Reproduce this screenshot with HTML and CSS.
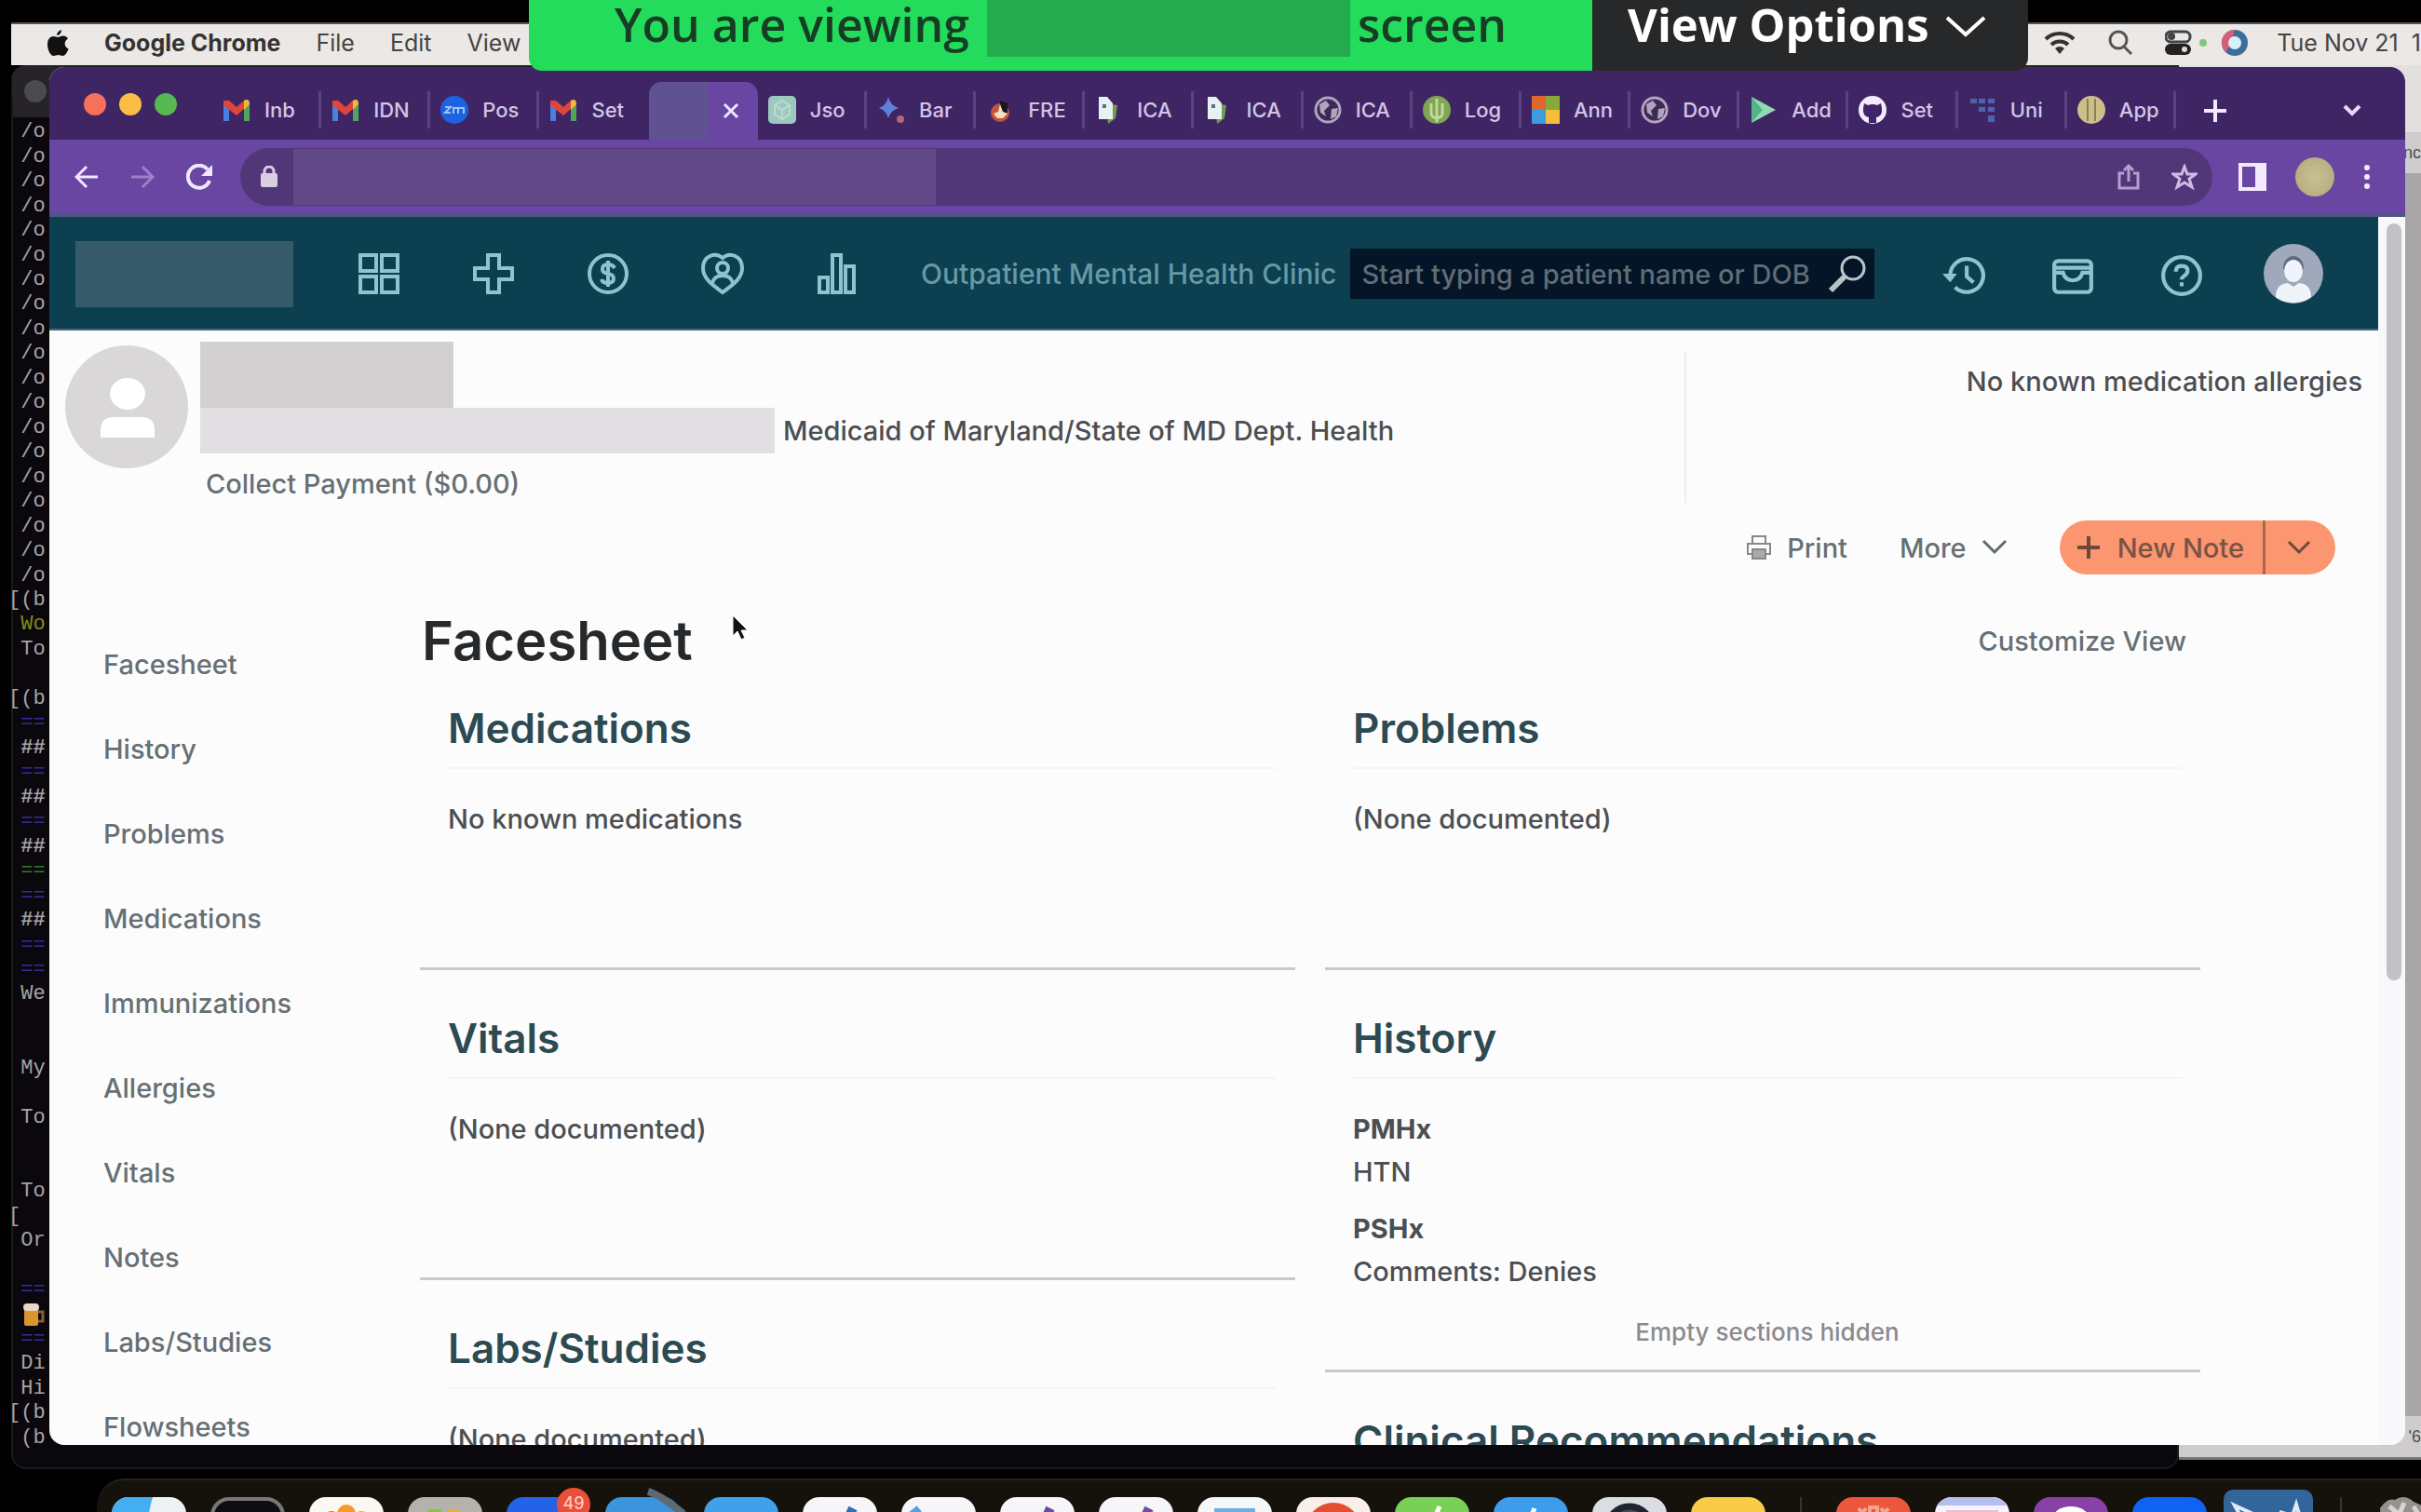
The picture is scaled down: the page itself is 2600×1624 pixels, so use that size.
FILE: index.html
```html
<!DOCTYPE html>
<html lang="en">
<head>
    <meta charset="UTF-8">
    <meta name="viewport" content="width=device-width, initial-scale=1.0">
    <title>Facesheet</title>
    <link rel="stylesheet" href="styles.css">
</head>
<body>
    <div class="desktop">
        <div class="menubar">
            <svg class="apple" viewBox="0 0 24 30"><path d="M16 1c0 3-2 6-5 6 0-3 2-5 5-6zM12 9c2 0 3-1.500 6-1.500 2 0 4 1 5 3-5 3-4 9 .5 11-1 3-3.500 7.500-6 7.500-2 0-3-1-5-1s-3 1-5 1C4 29 1 22 1 17c0-6 3-9 6.500-9C9.500 8 11 9 12 9z" fill="#111"/></svg>
            <strong>Google Chrome</strong>
            <span>File</span>
            <span>Edit</span>
            <span>View</span>
            <div class="status">
                <svg width="34" height="28" viewBox="0 0 34 28" fill="none" stroke="#333" stroke-width="4"><path d="M2 10a22 22 0 0 1 30 0M8 16a13 13 0 0 1 18 0"/><path d="M12 20l5 6 5-6a7 7 0 0 0-10 0z" fill="#333" stroke="none"/></svg>
                <svg width="28" height="28" viewBox="0 0 28 28" fill="none" stroke="#555" stroke-width="3"><circle cx="12" cy="11" r="9"/><path d="M18 18l8 8"/></svg>
                <svg class="control" width="46" height="28" viewBox="0 0 46 28"><rect x="1" y="2" width="26" height="11" rx="5" fill="none" stroke="#444" stroke-width="3"/><circle cx="7" cy="7" r="4" fill="#444"/><rect y="15" width="28" height="12" rx="6" fill="#222"/><circle cx="21" cy="21" r="3" fill="#ddd"/><circle cx="41" cy="14" r="4" fill="#7fc77c"/></svg>
                <svg width="30" height="30" viewBox="0 0 30 30"><circle cx="15" cy="15" r="14" fill="#3b6f9c"/><path d="M15 1A14 14 0 0 0 5 25l6-8z" fill="#d65c7c"/><circle cx="15" cy="15" r="7" fill="#d8f1f6"/></svg>
                <span class="date">Tue Nov 21&nbsp; 1</span>
            </div>
        </div>

        <div class="terminal">
            <div class="terminal-dot"></div>
            <div class="lines">
                <span> /o</span><span> /o</span><span> /o</span><span> /o</span><span> /o</span><span> /o</span>
                <span> /o</span><span> /o</span><span> /o</span><span> /o</span><span> /o</span><span> /o</span>
                <span> /o</span><span> /o</span><span> /o</span><span> /o</span><span> /o</span><span> /o</span>
                <span> /o</span>
                <span>[(b</span>
                <span class="yellow"> Wo</span>
                <span> To</span>
                <span></span>
                <span>[(b</span>
                <span class="blue"> ==</span>
                <span class="bold"> ##</span>
                <span class="blue"> ==</span>
                <span class="bold"> ##</span>
                <span class="blue"> ==</span>
                <span class="bold"> ##</span>
                <span class="green"> ==</span>
                <span class="blue"> ==</span>
                <span class="bold"> ##</span>
                <span class="blue"> ==</span>
                <span class="blue"> ==</span>
                <span> We</span>
                <span></span>
                <span></span>
                <span> My</span>
                <span></span>
                <span> To</span>
                <span></span>
                <span></span>
                <span> To</span>
                <span>[</span>
                <span> Or</span>
                <span></span>
                <span class="blue"> ==</span>
                <span><svg class="beer" viewBox="0 0 26 26"><rect x="3" y="6" width="15" height="19" rx="2" fill="#d9952e"/><path d="M18 10h5v10h-5" fill="none" stroke="#8a5a34" stroke-width="3"/><rect x="2" y="1" width="17" height="8" rx="4" fill="#e8d8c8"/></svg></span>
                <span class="blue"> ==</span>
                <span> Di</span>
                <span> Hi</span>
                <span>[(b</span>
                <span> (b</span>
            </div>
        </div>

        <div class="side-window">
            <div class="side-top"></div>
            <div class="side-label">nc</div>
            <div class="side-body"></div>
            <div class="side-label">'6</div>
        </div>

        <div class="browser">
            <div class="tabstrip">
                <div class="lights"><i class="red"></i><i class="amber"></i><i class="lime"></i></div>
                <div class="tabs">
                    <div class="tab"><svg viewBox="0 0 30 30"><use href="#gmail"/></svg><span>Inb</span></div>
                    <div class="tab"><svg viewBox="0 0 30 30"><use href="#gmail"/></svg><span>IDN</span></div>
                    <div class="tab"><svg viewBox="0 0 30 30"><circle cx="15" cy="15" r="15" fill="#1d62e0"/><path d="M5 12h6l-6 6h6M14 19v-6h5v6M19 13h6v6" fill="none" stroke="#9cc3f5" stroke-width="2"/></svg><span>Pos</span></div>
                    <div class="tab no-line"><svg viewBox="0 0 30 30"><use href="#gmail"/></svg><span>Set</span></div>
                    <div class="tab active"><div class="tab-mask"></div><button class="icon-btn" aria-label="Close tab"><svg width="18" height="18" viewBox="0 0 18 18" fill="none" stroke="#efe6ff" stroke-width="3"><path d="M2 2l14 14M16 2L2 16"/></svg></button></div>
                    <div class="tab"><svg viewBox="0 0 30 30"><rect width="30" height="30" rx="5" fill="#9cc8bd"/><path d="M15 5l8 5v10l-8 5-8-5V10zM7 10l8 5 8-5M15 15v10" fill="none" stroke="#b9dcd4" stroke-width="2"/></svg><span>Jso</span></div>
                    <div class="tab"><svg viewBox="0 0 30 30"><path d="M12 1q2 9 11 12-9 3-11 11Q10 16 2 13q8-3 10-12z" fill="#5b82d8"/><circle cx="25" cy="25" r="4" fill="#b0667c"/></svg><span>Bar</span></div>
                    <div class="tab"><svg viewBox="0 0 30 30"><circle cx="15" cy="18" r="10" fill="#c0563a"/><path d="M15 5l8 3v10h-8z" fill="#1c1620"/><path d="M15 9l3 8 5 2-5 5h-6l-4-5 5-2z" fill="#f4dfc4"/></svg><span>FRE</span></div>
                    <div class="tab"><svg viewBox="0 0 30 30"><use href="#bfile"/></svg><span>ICA</span></div>
                    <div class="tab"><svg viewBox="0 0 30 30"><use href="#bfile"/></svg><span>ICA</span></div>
                    <div class="tab"><svg viewBox="0 0 30 30"><use href="#globe"/></svg><span>ICA</span></div>
                    <div class="tab"><svg viewBox="0 0 30 30"><circle cx="15" cy="15" r="15" fill="#7fa653"/><path d="M15 3v25M9 8v11q0 4 6 5 6-1 6-5V8" fill="none" stroke="#c3d79b" stroke-width="3"/></svg><span>Log</span></div>
                    <div class="tab"><svg viewBox="0 0 30 30"><path d="M0 0h15v15H0z" fill="#e0662f"/><path d="M15 0h15v15H15z" fill="#86a93a"/><path d="M0 15h15v15H0z" fill="#3d9be0"/><path d="M15 15h15v15H15z" fill="#f4bd3a"/></svg><span>Ann</span></div>
                    <div class="tab"><svg viewBox="0 0 30 30"><use href="#globe"/></svg><span>Dov</span></div>
                    <div class="tab"><svg viewBox="0 0 30 30"><path d="M2 1l26 14L2 29z" fill="#8fdcb4"/><path d="M2 1l12 14L2 29z" fill="#54b487"/></svg><span>Add</span></div>
                    <div class="tab"><svg viewBox="0 0 30 30"><circle cx="15" cy="15" r="15" fill="#f3ecff"/><path d="M6 8l4 2q5-2 10 0l4-2 1 5q1 9-6 10v6h-8v-6Q4 22 5 13z" fill="#40246a"/></svg><span>Set</span></div>
                    <div class="tab"><svg viewBox="0 0 30 30" fill="#4c64ae"><path d="M2 3h7v5H2zM11 3h7v5h-7zM21 3h7v5h-7zM11 12h7v5h-7zM21 12h7v5h-7zM21 21h7v7h-7z"/></svg><span>Uni</span></div>
                    <div class="tab"><svg viewBox="0 0 30 30"><circle cx="15" cy="15" r="15" fill="#cdbf88"/><path d="M11 3v24M19 3v24" stroke="#8d7f5c" stroke-width="2"/></svg><span>App</span></div>
                </div>
                <div class="tab-tools">
                    <button class="icon-btn" aria-label="New tab"><svg width="24" height="24" viewBox="0 0 24 24" stroke="#f3eaff" stroke-width="4"><path d="M12 0v24M0 12h24"/></svg></button>
                    <button class="icon-btn" aria-label="Search tabs"><svg width="20" height="14" viewBox="0 0 20 14" fill="none" stroke="#e6d9f7" stroke-width="4"><path d="M2 2l8 8 8-8"/></svg></button>
                </div>
            </div>

            <div class="toolbar">
                <button class="icon-btn" aria-label="Back"><svg width="26" height="26" viewBox="0 0 26 26" fill="none" stroke="#efe6ff" stroke-width="3"><path d="M25 13H3M13 2L2 13l11 11"/></svg></button>
                <button class="icon-btn" aria-label="Forward"><svg width="26" height="26" viewBox="0 0 26 26" fill="none" stroke="#9c80c9" stroke-width="3"><path d="M1 13h22M13 2l11 11-11 11"/></svg></button>
                <button class="icon-btn" aria-label="Reload"><svg width="28" height="28" viewBox="0 0 28 28" fill="none" stroke="#efe6ff" stroke-width="4"><path d="M23 6a12 12 0 1 0 2 12"/><path d="M28 1v12H16z" fill="#efe6ff" stroke="none"/></svg></button>
                <div class="omnibox">
                    <svg width="18" height="24" viewBox="0 0 18 24"><rect y="8" width="18" height="15" rx="2" fill="#d9cfe4"/><path d="M4 9V6a5 5 0 0 1 10 0v3" fill="none" stroke="#d9cfe4" stroke-width="3"/></svg>
                    <div class="url-mask"></div>
                    <button class="icon-btn" aria-label="Share"><svg width="26" height="30" viewBox="0 0 26 30" fill="none" stroke="#b49fd0" stroke-width="3"><path d="M8 11H3v16h20V11h-5M13 20V3M8 8l5-5 5 5"/></svg></button>
                    <button class="icon-btn" aria-label="Bookmark"><svg width="28" height="28" viewBox="0 0 28 28" fill="none" stroke="#cdbbe4" stroke-width="3"><path d="M14 3l3 8h9l-7 5 3 9-8-5-8 5 3-9-7-5h9z"/></svg></button>
                </div>
                <div class="toolbar-end">
                    <button class="icon-btn" aria-label="Side panel"><svg width="30" height="30" viewBox="0 0 30 30"><rect x="2" y="2" width="26" height="26" fill="none" stroke="#f3eaff" stroke-width="4"/><path d="M18 2h10v26H18z" fill="#f3eaff"/></svg></button>
                    <div class="profile"></div>
                    <button class="icon-btn" aria-label="Menu"><svg width="8" height="28" viewBox="0 0 8 28" fill="#f3eaff"><circle cx="4" cy="4" r="3"/><circle cx="4" cy="14" r="3"/><circle cx="4" cy="24" r="3"/></svg></button>
                </div>
            </div>

            <div class="viewport">
                <div class="page">
                    <header class="app-header">
                        <div class="logo-mask"></div>
                        <nav class="app-nav">
                            <a href="#" aria-label="Dashboard"><svg viewBox="0 0 46 46"><path d="M3 3h17v17H3zM26 3h17v17H26zM3 26h17v17H3zM26 26h17v17H26z"/></svg></a>
                            <a href="#" aria-label="Clinical"><svg viewBox="0 0 46 46"><path d="M17 3h12v14h14v12H29v14H17V29H3V17h14z"/></svg></a>
                            <a href="#" aria-label="Billing"><svg viewBox="0 0 46 46"><circle cx="23" cy="23" r="20"/><path d="M30 17q-2-4-7-4-6 0-6 5 0 4 6 5t6 5q0 5-6 5-6 0-7-4M23 9v28"/></svg></a>
                            <a href="#" aria-label="Patient care"><svg viewBox="0 0 46 46"><path d="M23 6C15-1 2 4 2 17c0 12 12 19 21 26 9-7 21-14 21-26C44 4 31-1 23 6z"/><circle cx="23" cy="17" r="6"/><path d="M12 33q2-8 11-8t11 8"/></svg></a>
                            <a href="#" aria-label="Reports"><svg viewBox="0 0 46 46"><path d="M4 27h9v16H4zM18 3h9v40h-9zM32 15h9v28h-9z"/></svg></a>
                        </nav>
                        <span class="clinic">Outpatient Mental Health Clinic</span>
                        <label class="search">
                            <input type="text" aria-label="Patient search" placeholder="Start typing a patient name or DOB">
                            <svg viewBox="0 0 42 42" fill="none" stroke="#b9c4ca" stroke-width="3"><circle cx="27" cy="15" r="12"/><path d="M18 24L3 39" stroke-width="6"/></svg>
                        </label>
                        <div class="app-tools">
                            <button class="icon-btn" aria-label="Recent"><svg viewBox="0 0 44 44"><path d="M8 22A17 17 0 1 1 13 34"/><path d="M25 12v11l7 6"/><path d="M0 20h15l-7 9z" fill="#8ec4d2" stroke="none"/></svg></button>
                            <button class="icon-btn" aria-label="Messages"><svg viewBox="0 0 44 44"><rect x="3" y="7" width="38" height="32" rx="4"/><path d="M3 14h38M4 19h8q2 8 10 8t10-8h8"/></svg></button>
                            <button class="icon-btn" aria-label="Help"><svg viewBox="0 0 44 44"><circle cx="22" cy="22" r="19"/><path d="M16 18q0-6 6-6t6 5q0 3-3 5t-3 4M22 29v4"/></svg></button>
                            <svg class="user" viewBox="0 0 64 64"><circle cx="32" cy="32" r="32" fill="#a0a8bb"/><path d="M21 26a11 13 0 0 1 22 0l-2 4H23z" fill="#626a80"/><ellipse cx="32" cy="29" rx="10" ry="12" fill="#eef4fa"/><path d="M13 57q0-14 13-15l6 4 6-4q13 1 13 15a32 32 0 0 1-38 0z" fill="#eef4fa"/></svg>
                        </div>
                    </header>

                    <section class="patient">
                        <svg class="patient-photo" viewBox="0 0 132 132"><circle cx="66" cy="66" r="66" fill="#dad7d9"/><ellipse cx="67" cy="52" rx="19" ry="17" fill="#fff"/><path d="M38 99V91q0-14 14-14h30q14 0 14 14v8z" fill="#fff"/></svg>
                        <div class="patient-info">
                            <div class="name-mask"></div>
                            <div class="detail-row"><div class="detail-mask"></div><span>Medicaid of Maryland/State of MD Dept. Health</span></div>
                            <a href="#" class="collect">Collect Payment ($0.00)</a>
                        </div>
                        <div class="allergies">No known medication allergies</div>
                    </section>

                    <div class="actions">
                        <button class="text-btn"><svg width="28" height="28" viewBox="0 0 28 28" fill="none" stroke="#888" stroke-width="2"><path d="M7 10V2h14v8M7 21H2V10h24v11h-5"/><rect x="7" y="16" width="14" height="10" fill="#aaa"/></svg>Print</button>
                        <button class="text-btn">More<svg width="28" height="18" viewBox="0 0 28 18" fill="none" stroke="#5f6a6e" stroke-width="3"><path d="M2 2l12 12L26 2"/></svg></button>
                        <div class="new-note">
                            <button><svg width="26" height="26" viewBox="0 0 26 26" stroke="#6b4a3c" stroke-width="4"><path d="M13 1v24M1 13h24"/></svg>New Note</button>
                            <button aria-label="Note types"><svg width="26" height="16" viewBox="0 0 26 16" fill="none" stroke="#6b4a3c" stroke-width="3"><path d="M2 2l11 11L24 2"/></svg></button>
                        </div>
                    </div>

                    <div class="body">
                        <nav class="sidebar">
                            <a href="#">Facesheet</a>
                            <a href="#">History</a>
                            <a href="#">Problems</a>
                            <a href="#">Medications</a>
                            <a href="#">Immunizations</a>
                            <a href="#">Allergies</a>
                            <a href="#">Vitals</a>
                            <a href="#">Notes</a>
                            <a href="#">Labs/Studies</a>
                            <a href="#">Flowsheets</a>
                        </nav>
                        <main class="facesheet">
                            <div class="title-row">
                                <h1>Facesheet</h1>
                                <a href="#">Customize View</a>
                            </div>
                            <div class="columns">
                                <div class="column">
                                    <section class="card"><h2>Medications</h2><p>No known medications</p></section>
                                    <section class="card"><h2>Vitals</h2><p>(None documented)</p></section>
                                    <section class="card"><h2>Labs/Studies</h2><p>(None documented)</p></section>
                                </div>
                                <div class="column">
                                    <section class="card"><h2>Problems</h2><p>(None documented)</p></section>
                                    <section class="card">
                                        <h2>History</h2>
                                        <p><b>PMHx</b><br>HTN</p>
                                        <p><b>PSHx</b><br>Comments: Denies</p>
                                        <p class="hidden-note">Empty sections hidden</p>
                                    </section>
                                    <section class="card"><h2>Clinical Recommendations</h2></section>
                                </div>
                            </div>
                        </main>
                    </div>
                </div>
                <div class="scrollbar"><div class="thumb"></div></div>
            </div>
        </div>

        <div class="share-bar">
            <div class="sharing">You are viewing <span class="share-mask"></span> screen</div>
            <button class="view-options">View Options<svg width="46" height="26" viewBox="0 0 46 26" fill="none" stroke="#fff" stroke-width="4"><path d="M3 3l20 18L43 3"/></svg></button>
        </div>

        <svg class="cursor" viewBox="0 0 18 28"><path d="M1 1v22l5-5 4 9 4-2-4-8h7z" fill="#111" stroke="#fff" stroke-width="1"/></svg>

        <div class="dock">
            <svg viewBox="0 0 80 80"><rect width="80" height="80" rx="18" fill="#eef1f4"/><path d="M18 0h26q-6 20-6 40H0V18A18 18 0 0 1 18 0z" fill="#43aef0"/></svg>
            <svg viewBox="0 0 80 80"><rect x="2" y="2" width="76" height="76" rx="18" fill="#0e0e12" stroke="#777" stroke-width="4"/></svg>
            <svg viewBox="0 0 80 80"><rect width="80" height="80" rx="18" fill="#fbf7f2"/><circle cx="40" cy="18" r="10" fill="#f39c2b"/><circle cx="24" cy="24" r="9" fill="#f2693e"/><circle cx="56" cy="24" r="9" fill="#d6c03c"/></svg>
            <svg viewBox="0 0 80 80"><rect width="80" height="80" rx="18" fill="#b4b2ac"/><rect x="22" y="13" width="14" height="12" fill="#8bc34a"/><rect x="42" y="13" width="14" height="12" fill="#e5b13c"/></svg>
            <div class="dock-item"><svg viewBox="0 0 80 80"><rect width="80" height="80" rx="18" fill="#2463e8"/></svg><span class="badge">49</span></div>
            <svg viewBox="0 0 80 80"><rect width="80" height="80" rx="18" fill="#3c94dc"/><path d="M46-6q14 4 38 24" fill="none" stroke="#5c6a76" stroke-width="8"/></svg>
            <svg viewBox="0 0 80 80"><rect width="80" height="80" rx="18" fill="#41a0ea"/></svg>
            <svg viewBox="0 0 80 80"><rect width="80" height="80" rx="18" fill="#f6f5f7"/><path d="M54 12L38 46" stroke="#2b6fb5" stroke-width="10"/></svg>
            <svg viewBox="0 0 80 80"><rect width="80" height="80" rx="18" fill="#f6f5f7"/><path d="M12 13l16 20" stroke="#5ba0dd" stroke-width="12"/></svg>
            <svg viewBox="0 0 80 80"><rect width="80" height="80" rx="18" fill="#f6f5f7"/><path d="M54 12L38 46" stroke="#6d4aa8" stroke-width="10"/></svg>
            <svg viewBox="0 0 80 80"><rect width="80" height="80" rx="18" fill="#f6f5f7"/><path d="M54 12L38 46" stroke="#7a48a8" stroke-width="10"/></svg>
            <svg viewBox="0 0 80 80"><rect width="80" height="80" rx="18" fill="#f6f7f9"/><rect x="18" y="12" width="44" height="40" fill="#6ab0e4"/></svg>
            <svg viewBox="0 0 80 80"><rect width="80" height="80" rx="18" fill="#f8efec"/><circle cx="40" cy="36" r="30" fill="#e3502f"/></svg>
            <svg viewBox="0 0 80 80"><rect width="80" height="80" rx="18" fill="#79d056"/><path d="M48 10l-6 14" stroke="#fff" stroke-width="5"/></svg>
            <svg viewBox="0 0 80 80"><rect width="80" height="80" rx="18" fill="#3d9cec"/><path d="M44 12l-6 14" stroke="#fff" stroke-width="5"/></svg>
            <svg viewBox="0 0 80 80"><rect width="80" height="80" rx="18" fill="#dcdde2"/><circle cx="40" cy="34" r="24" fill="#444b57" stroke="#20242c" stroke-width="7"/></svg>
            <svg viewBox="0 0 80 80"><rect width="80" height="80" rx="18" fill="#f9cb46"/></svg>
            <i class="dock-line"></i>
            <svg viewBox="0 0 80 80"><rect width="80" height="80" rx="18" fill="#ea573c"/><path d="M24 12l8 10M32 12l-8 10M48 12l8 10M56 12l-8 10M36 11h8v12h-8z" fill="none" stroke="#f5a58f" stroke-width="4"/></svg>
            <svg viewBox="0 0 80 80"><rect width="80" height="80" rx="18" fill="#f7f2fb"/><path d="M18 0h44q12 2 16 9H2Q6 2 18 0z" fill="#b3bfec"/><path d="M12 17h56" stroke="#e9bfd8" stroke-width="6"/></svg>
            <svg viewBox="0 0 80 80"><rect width="80" height="80" rx="18" fill="#8841a6"/><ellipse cx="40" cy="24" rx="20" ry="14" fill="#fff"/></svg>
            <svg viewBox="0 0 80 80"><rect width="80" height="80" rx="18" fill="#0f62f2"/></svg>
            <svg class="big" viewBox="0 0 96 96"><rect width="96" height="96" rx="10" fill="#32659a"/><path d="M12 17l26 12-14 10zM60 24l14 4 4-12 6 20" fill="none" stroke="#dfeaf4" stroke-width="4"/></svg>
            <i class="dock-line"></i>
            <svg viewBox="0 0 80 80"><path d="M4 12q8-12 16-9 10-7 20 2l14 6v60H8z" fill="#96918e"/><path d="M14 10l10 8M30 6l-6 14M40 10l6 10" stroke="#d8d4d0" stroke-width="5"/></svg>
        </div>
    </div>

    <!-- shared favicons -->
    <svg class="sprite">
        <symbol id="gmail" viewBox="0 0 30 30"><path d="M1 7v20h6V12z" fill="#4a7fe0"/><path d="M29 7v20h-6V12z" fill="#4fa65a"/><path d="M1 5l6 0 8 7 8-7v9l-8 7-14-11z" fill="#e0453a"/><path d="M23 5q6-3 6 4l-6 6z" fill="#f1b93a"/></symbol>
        <symbol id="globe" viewBox="0 0 30 30"><circle cx="15" cy="15" r="13" fill="#3b2b52" stroke="#b3a3c2" stroke-width="3"/><path d="M6 9l7-4 4 5-6 6 2 6-6-4zM19 14l7-1-2 9-6 3z" fill="#b3a3c2"/></symbol>
        <symbol id="bfile" viewBox="0 0 30 30"><path d="M12 8l12 2-2 14-8 6z" fill="#6f9c52"/><path d="M4 1h9l6 7v17H4z" fill="#e6f2f2"/><path d="M8 9h4v4H8z" fill="#5c6f86"/></symbol>
    </svg>
</body>
</html>
```
FILE: styles.css
```css
:root {
    --purple-dark: #402565;
    --purple: #6846a1;
    --teal: #0c3f50;
    --teal-icon: #8ec4d2;
    --orange: #fb9671;
    --text: #4b4f52;
    --muted: #667074;
}

* {
    box-sizing: border-box;
}

body {
    margin: 0;
    background: #000;
    font-family: Inter, "Liberation Sans", sans-serif;
    font-size: 29px;
    font-weight: 500;
    color: var(--text);
}

a {
    color: inherit;
    text-decoration: none;
}

button {
    font: inherit;
    color: inherit;
    background: none;
    border: none;
    padding: 0;
    cursor: pointer;
}

svg {
    display: block;
    flex-shrink: 0;
}

.sprite {
    display: none;
}

.icon-btn {
    display: flex;
    align-items: center;
    justify-content: center;
}

.desktop {
    position: relative;
    height: 100vh;
    overflow: hidden;
}

/* mac menu bar */
.menubar {
    position: absolute;
    top: 24px;
    left: 12px;
    right: 0;
    height: 46px;
    padding: 0 0 4px 38px;
    display: flex;
    align-items: center;
    gap: 38px;
    background: #ece8e6;
    border-top: 2px solid #555;
    font-size: 25px;
    font-weight: 400;
    color: #444;
    white-space: nowrap;
}

.menubar strong {
    font-weight: 700;
    color: #333;
}

.apple {
    width: 24px;
    height: 30px;
}

.status {
    margin-left: auto;
    display: flex;
    align-items: center;
    gap: 34px;
}

.control {
    margin-right: -20px;
}

.date {
    margin-left: -4px;
}

/* terminal behind the browser */
.terminal {
    position: absolute;
    top: 70px;
    left: 12px;
    right: 260px;
    bottom: 46px;
    padding: 3px 0 18px;
    background: #0a080d;
    border: 2px solid #1b191d;
    border-top: 56px solid #262428;
    border-radius: 16px 0 16px 16px;
}

.terminal-dot {
    position: absolute;
    top: -40px;
    left: 12px;
    width: 24px;
    height: 24px;
    border-radius: 50%;
    background: #4c4a4d;
}

.lines {
    height: 100%;
    margin-left: -5px;
    display: grid;
    grid-auto-rows: 1fr;
    align-items: center;
    font: 22px/26px "Liberation Mono", monospace;
    color: #a5a3a6;
    white-space: pre;
}

.lines span {
    height: 26px;
}

.lines .bold {
    font-weight: bold;
}

.lines .blue {
    color: #3a2a9c;
}

.lines .green {
    color: #2f7a2f;
}

.lines .yellow {
    color: #85891c;
}

.beer {
    width: 26px;
    height: 26px;
    margin-left: 14px;
}

/* light window at the right edge */
.side-window {
    position: absolute;
    top: 70px;
    right: 0;
    bottom: 56px;
    width: 260px;
    display: flex;
    flex-direction: column;
    background: #b8b5b7;
    border-bottom: 3px solid #777;
}

.side-top {
    height: 72px;
    background: #e2dfdf;
}

.side-label {
    height: 44px;
    line-height: 44px;
    text-align: right;
    font-family: "Liberation Sans", sans-serif;
    font-size: 18px;
    background: #cfcccd;
}

.side-body {
    flex: 1;
    background: #a9a6a8;
}

/* browser window */
.browser {
    position: absolute;
    top: 72px;
    left: 53px;
    right: 17px;
    bottom: 72px;
    display: flex;
    flex-direction: column;
    background: #fdfcfd;
    border-radius: 16px;
    overflow: hidden;
}

.tabstrip {
    height: 78px;
    display: flex;
    background: var(--purple-dark);
}

.lights {
    width: 175px;
    display: flex;
    gap: 14px;
    padding: 28px 0 0 37px;
}

.lights i {
    width: 24px;
    height: 24px;
    border-radius: 50%;
}

.lights .red {
    background: #f6705b;
}

.lights .amber {
    background: #fbbd44;
}

.lights .lime {
    background: #56b84f;
}

.tabs {
    flex: 1;
    min-width: 0;
    display: grid;
    grid-template-columns: repeat(18, minmax(0, 1fr));
    padding-top: 16px;
}

.tab {
    display: flex;
    align-items: center;
    gap: 15px;
    padding: 0 10px 0 11px;
    margin-bottom: 2px;
    color: #d3c5e6;
    font-size: 22px;
    background: linear-gradient(#5b4283, #5b4283) right 50% / 3px 40px no-repeat;
}

.tab.no-line {
    background: none;
}

.tab svg {
    width: 30px;
    height: 30px;
}

.tab span {
    white-space: nowrap;
}

.tab.active {
    margin-bottom: 0;
    padding: 0 20px 0 0;
    background: var(--purple);
    border-radius: 14px 14px 0 0;
    justify-content: space-between;
    overflow: hidden;
}

.tab.active svg {
    width: 18px;
    height: 18px;
}

.tab-mask {
    width: 66px;
    height: 100%;
    background: #5f5292;
}

.tab-tools {
    width: 246px;
    display: flex;
    align-items: center;
    justify-content: space-between;
    padding: 16px 47px 0 30px;
}

.toolbar {
    height: 83px;
    display: flex;
    align-items: center;
    gap: 34px;
    padding: 0 37px 0 27px;
    background: var(--purple);
    border-bottom: 4px solid #4e5684;
}

.omnibox {
    flex: 1;
    height: 62px;
    display: flex;
    align-items: center;
    gap: 33px;
    margin-left: -4px;
    padding: 0 16px 0 22px;
    background: #523778;
    border-radius: 31px;
}

.url-mask {
    width: 690px;
    height: 60px;
    margin: 0 auto 0 -16px;
    background: #614886;
}

.toolbar-end {
    display: flex;
    align-items: center;
    gap: 31px;
    margin-left: -6px;
}

.profile {
    width: 42px;
    height: 42px;
    border-radius: 50%;
    background: radial-gradient(#c9c095, #b0a878);
}

/* page area */
.viewport {
    flex: 1;
    min-height: 0;
    display: flex;
}

.page {
    flex: 1;
    min-width: 0;
    overflow: hidden;
}

.scrollbar {
    width: 29px;
    padding: 7px 4px 0 9px;
    background: #f8f7f9;
}

.thumb {
    height: 62%;
    border-radius: 8px;
    background: #c3c1c4;
}

.app-header {
    height: 122px;
    display: flex;
    align-items: center;
    padding: 2px 59px 0 28px;
    background: var(--teal);
    border-bottom: 2px solid #4c6670;
}

.logo-mask {
    width: 234px;
    height: 71px;
    margin-right: 69px;
    background: #355b6a;
}

.app-nav {
    display: flex;
    gap: 77px;
    margin-right: 67px;
}

.app-nav svg,
.app-tools .icon-btn svg {
    width: 46px;
    height: 46px;
    fill: none;
    stroke: var(--teal-icon);
    stroke-width: 4;
}

.app-tools .icon-btn {
    padding-top: 4px;
}

.clinic {
    margin-right: 15px;
    color: #6599a6;
    font-size: 30px;
    white-space: nowrap;
}

.search {
    flex: 1;
    min-width: 0;
    height: 54px;
    display: flex;
    align-items: center;
    padding: 0 8px 0 12px;
    background: #031526;
}

.search input {
    flex: 1;
    min-width: 0;
    padding: 0;
    border: none;
    outline: none;
    background: none;
    color: #fff;
    font: inherit;
}

.search input::placeholder {
    color: #606c76;
}

.search svg {
    width: 42px;
    height: 42px;
}

.app-tools {
    display: flex;
    align-items: center;
    gap: 71px;
    margin-left: 73px;
}

.app-tools .user {
    width: 64px;
    height: 64px;
    margin-left: -6px;
}

.patient {
    display: flex;
    padding: 12px 0 0 17px;
}

.patient-photo {
    width: 132px;
    height: 132px;
    margin: 4px 13px 0 0;
}

.name-mask {
    width: 272px;
    height: 71px;
    background: #d2d0d1;
}

.detail-row {
    display: flex;
    align-items: center;
    gap: 9px;
    white-space: nowrap;
}

.detail-mask {
    width: 617px;
    height: 49px;
    background: #e1dfe1;
}

.collect {
    display: inline-block;
    margin: 13px 0 0 6px;
    line-height: 40px;
    color: var(--muted);
}

.allergies {
    width: 30%;
    height: 162px;
    flex-shrink: 0;
    margin: 11px 0 0 auto;
    padding: 12px 17px 0 0;
    line-height: 40px;
    text-align: right;
    border-left: 2px solid #efedef;
}

.actions {
    display: flex;
    justify-content: flex-end;
    align-items: center;
    gap: 56px;
    height: 58px;
    margin: 19px 46px 0 0;
    color: var(--muted);
}

.text-btn {
    display: flex;
    align-items: center;
    gap: 16px;
}

.new-note {
    display: flex;
    height: 58px;
    border-radius: 29px;
    background: var(--orange);
    color: #7a5344;
    overflow: hidden;
}

.new-note button {
    display: flex;
    align-items: center;
    gap: 18px;
    padding: 0 20px 0 18px;
}

.new-note button + button {
    padding: 0 26px 0 23px;
    border-left: 3px solid #a86850;
}

.body {
    display: flex;
}

.sidebar {
    width: 398px;
    padding: 51px 0 0 58px;
    display: flex;
    flex-direction: column;
    color: var(--muted);
}

.sidebar a {
    line-height: 91px;
}

.facesheet {
    flex: 1;
    padding: 38px 191px 0 0;
}

.title-row {
    display: flex;
    justify-content: space-between;
    align-items: center;
    height: 66px;
    padding: 0 15px 0 2px;
    margin-bottom: 20px;
    color: var(--muted);
}

h1 {
    margin: 0;
    font-size: 58px;
    font-weight: 600;
    color: #26292b;
}

.columns {
    display: grid;
    grid-template-columns: 1fr 1fr;
    gap: 32px;
}

.column {
    display: flex;
    flex-direction: column;
    gap: 32px;
}

.card {
    min-height: 301px;
    padding: 16px 20px 17px 30px;
    border-bottom: 3px solid #c9c8ca;
}

.card h2 {
    margin: 0 0 31px;
    padding-bottom: 17px;
    border-bottom: 2px solid #f5f4f6;
    font-size: 44px;
    line-height: 50px;
    font-weight: 600;
    color: #2c4a52;
}

.card p {
    margin: 0 0 15px;
    line-height: 46px;
}

.card .hidden-note {
    margin: 19px 0 0;
    text-align: center;
    font-size: 26px;
    color: #8b8b8d;
}

/* screen share bar */
.share-bar {
    position: absolute;
    top: 0;
    left: 568px;
    display: flex;
    height: 76px;
    border-radius: 0 0 14px 14px;
    overflow: hidden;
    font-family: "Open Sans", sans-serif;
    font-size: 50px;
    font-weight: 600;
    line-height: 52px;
    white-space: nowrap;
}

.sharing {
    display: flex;
    gap: 8px;
    padding: 0 92px;
    background: #23dc5c;
    color: #173d24;
}

.share-mask {
    width: 390px;
    height: 61px;
    margin-left: 11px;
    background: #24ab4d;
}

.view-options {
    display: flex;
    gap: 16px;
    padding: 0 44px 0 38px;
    background: #262829;
    color: #fff;
    font-size: 49px;
    font-weight: 700;
}

.view-options svg {
    margin-top: 16px;
}

.cursor {
    position: absolute;
    top: 660px;
    left: 786px;
    width: 18px;
    height: 28px;
}

/* dock */
.dock {
    position: absolute;
    left: 104px;
    right: -40px;
    bottom: 0;
    height: 36px;
    padding: 18px 0 0 16px;
    display: flex;
    gap: 26px;
    background: #15120b;
    border-top: 2px solid #24221c;
    border-radius: 30px 0 0 0;
}

.dock svg {
    width: 80px;
    height: 80px;
    overflow: visible;
}

.dock .big {
    width: 96px;
    height: 96px;
    margin: -8px -8px 0;
}

.dock-item {
    position: relative;
}

.badge {
    position: absolute;
    top: -10px;
    right: -10px;
    width: 36px;
    height: 36px;
    border-radius: 50%;
    background: #ea4f3a;
    color: #ffc9bf;
    font-size: 18px;
    line-height: 34px;
    text-align: center;
}

.dock-line {
    width: 24px;
    height: 40px;
    flex-shrink: 0;
    background: linear-gradient(#3a362c, #3a362c) center / 2px 40px no-repeat;
}
```
